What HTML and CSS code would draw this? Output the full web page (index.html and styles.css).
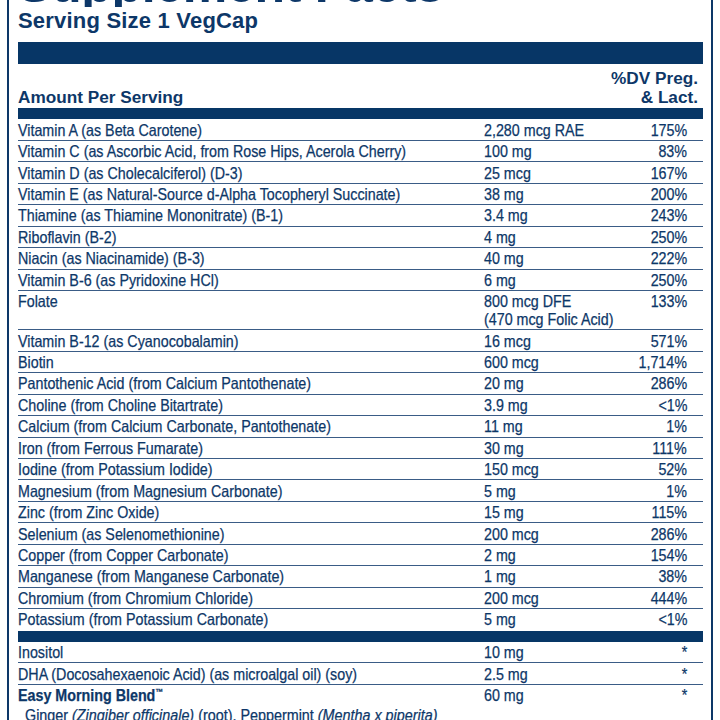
FILE: index.html
```html
<!DOCTYPE html>
<html lang="en">
<head>
<meta charset="utf-8">
<title>Supplement Facts</title>
<link rel="stylesheet" href="styles.css">
</head>
<body>
<div class="panel">
  <div class="title"><span class="title-text">Supplement Facts</span></div>
  <div class="serving">Serving Size 1 VegCap</div>
  <div class="bar bar-thick"></div>
  <div class="head">
    <div class="head-amount">Amount Per Serving</div>
    <div class="head-dv">%DV Preg.<br>&amp; Lact.</div>
  </div>
  <div class="bar bar-mid"></div>
  <div class="rows">
    <div class="row"><span class="name">Vitamin A (as Beta Carotene)</span><span class="amt">2,280 mcg RAE</span><span class="dv">175%</span></div>
    <div class="row"><span class="name">Vitamin C (as Ascorbic Acid, from Rose Hips, Acerola Cherry)</span><span class="amt">100 mg</span><span class="dv">83%</span></div>
    <div class="row"><span class="name">Vitamin D (as Cholecalciferol) (D-3)</span><span class="amt">25 mcg</span><span class="dv">167%</span></div>
    <div class="row"><span class="name">Vitamin E (as Natural-Source d-Alpha Tocopheryl Succinate)</span><span class="amt">38 mg</span><span class="dv">200%</span></div>
    <div class="row"><span class="name">Thiamine (as Thiamine Mononitrate) (B-1)</span><span class="amt">3.4 mg</span><span class="dv">243%</span></div>
    <div class="row"><span class="name">Riboflavin (B-2)</span><span class="amt">4 mg</span><span class="dv">250%</span></div>
    <div class="row"><span class="name">Niacin (as Niacinamide) (B-3)</span><span class="amt">40 mg</span><span class="dv">222%</span></div>
    <div class="row"><span class="name">Vitamin B-6 (as Pyridoxine HCl)</span><span class="amt">6 mg</span><span class="dv">250%</span></div>
    <div class="row"><span class="name">Folate</span><span class="amt">800 mcg DFE<br>(470 mcg Folic Acid)</span><span class="dv">133%</span></div>
    <div class="row"><span class="name">Vitamin B-12 (as Cyanocobalamin)</span><span class="amt">16 mcg</span><span class="dv">571%</span></div>
    <div class="row"><span class="name">Biotin</span><span class="amt">600 mcg</span><span class="dv">1,714%</span></div>
    <div class="row"><span class="name">Pantothenic Acid (from Calcium Pantothenate)</span><span class="amt">20 mg</span><span class="dv">286%</span></div>
    <div class="row"><span class="name">Choline (from Choline Bitartrate)</span><span class="amt">3.9 mg</span><span class="dv">&lt;1%</span></div>
    <div class="row"><span class="name">Calcium (from Calcium Carbonate, Pantothenate)</span><span class="amt">11 mg</span><span class="dv">1%</span></div>
    <div class="row"><span class="name">Iron (from Ferrous Fumarate)</span><span class="amt">30 mg</span><span class="dv">111%</span></div>
    <div class="row"><span class="name">Iodine (from Potassium Iodide)</span><span class="amt">150 mcg</span><span class="dv">52%</span></div>
    <div class="row"><span class="name">Magnesium (from Magnesium Carbonate)</span><span class="amt">5 mg</span><span class="dv">1%</span></div>
    <div class="row"><span class="name">Zinc (from Zinc Oxide)</span><span class="amt">15 mg</span><span class="dv">115%</span></div>
    <div class="row"><span class="name">Selenium (as Selenomethionine)</span><span class="amt">200 mcg</span><span class="dv">286%</span></div>
    <div class="row"><span class="name">Copper (from Copper Carbonate)</span><span class="amt">2 mg</span><span class="dv">154%</span></div>
    <div class="row"><span class="name">Manganese (from Manganese Carbonate)</span><span class="amt">1 mg</span><span class="dv">38%</span></div>
    <div class="row"><span class="name">Chromium (from Chromium Chloride)</span><span class="amt">200 mcg</span><span class="dv">444%</span></div>
    <div class="row row-last"><span class="name">Potassium (from Potassium Carbonate)</span><span class="amt">5 mg</span><span class="dv">&lt;1%</span></div>
  </div>
  <div class="bar bar-mid"></div>
  <div class="rows">
    <div class="row"><span class="name">Inositol</span><span class="amt">10 mg</span><span class="dv">*</span></div>
    <div class="row"><span class="name">DHA (Docosahexaenoic Acid) (as microalgal oil) (soy)</span><span class="amt">2.5 mg</span><span class="dv">*</span></div>
    <div class="row row-last"><span class="name blend">Easy Morning Blend<sup class="tm">™</sup></span><span class="amt">60 mg</span><span class="dv">*</span></div>
    <div class="sub"><span class="sub-text">Ginger <i>(Zingiber officinale)</i> (root), Peppermint <i>(Mentha x piperita)</i></span></div>
  </div>
</div>
</body>
</html>
```

FILE: styles.css
```css
html, body {
  margin: 0;
  padding: 0;
  background: #ffffff;
}

body {
  color: #0d3768;
  font-family: "Liberation Sans", Arial, sans-serif;
}

.panel {
  margin-left: 7px;
  border-left: 2px solid #0d3768;
  border-right: 2px solid #0d3768;
  padding: 0 8px 0 9px;
  box-sizing: border-box;
  width: 706px;
  min-height: 760px;
}

.title {
  height: 7px;
  overflow: hidden;
  font-weight: bold;
  font-size: 50px;
  line-height: 50px;
}

.title-text {
  display: block;
  margin-top: -40px;
  letter-spacing: -0.3px;
}

.serving {
  margin-top: 3.4px;
  font-weight: bold;
  font-size: 22px;
  line-height: 22px;
  letter-spacing: 0.2px;
}

.bar {
  background: #073666;
}

.bar-thick {
  margin-top: 9.6px;
  height: 22px;
}

.bar-mid {
  height: 11.5px;
}

.head {
  height: 44px;
  box-sizing: border-box;
  padding: 0 5px 1.4px 0;
  display: flex;
  justify-content: space-between;
  align-items: flex-end;
  font-weight: bold;
  font-size: 17.2px;
  line-height: 19px;
}

.head-dv {
  text-align: right;
}

.rows {
  font-size: 16.5px;
  -webkit-text-stroke: 0.25px currentColor;
}

.row {
  display: grid;
  grid-template-columns: 466px 1fr auto;
  padding: 1.2px 16px 1.25px 0;
  line-height: 18px;
  border-bottom: 1px solid #3a5c86;
}

.row > span {
  display: block;
  white-space: nowrap;
  transform: scaleX(0.866);
  transform-origin: left center;
}

.row > .dv {
  text-align: right;
  transform-origin: right center;
}

.row-last {
  border-bottom: none;
  padding-bottom: 2.25px;
}

.blend {
  font-weight: bold;
}

.tm {
  font-size: 9px;
  vertical-align: 6px;
  line-height: 0;
}

.sub {
  padding-left: 7px;
  line-height: 18px;
}

.sub-text {
  display: inline-block;
  white-space: nowrap;
  transform: scaleX(0.87);
  transform-origin: left center;
}
```
